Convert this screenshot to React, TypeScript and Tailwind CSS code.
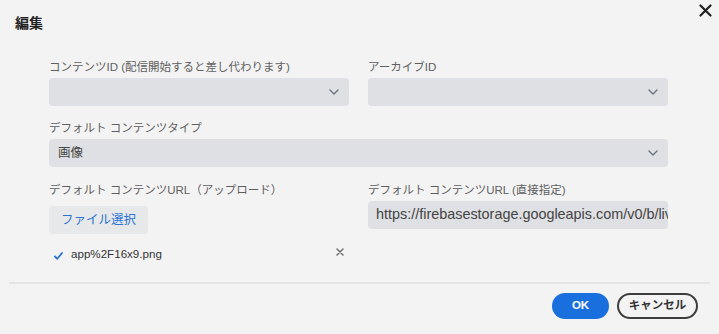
import React from "react";

const font = { fontFamily: '"Liberation Sans", "Noto Sans CJK JP", sans-serif' };

function Chevron() {
  return (
    <svg width="10" height="6" viewBox="0 0 10 6" className="shrink-0">
      <path d="M1 1l4 4 4-4" fill="none" stroke="#6b7280" strokeWidth="1.4" strokeLinecap="round" strokeLinejoin="round" />
    </svg>
  );
}

function Label({ children }: { children: React.ReactNode }) {
  return <div className="h-4 text-[11.5px] leading-4 text-[#5f5f5f] whitespace-nowrap">{children}</div>;
}

function Select({ value }: { value?: string }) {
  return (
    <div className="mt-[3px] flex h-7 items-center justify-between rounded-[4px] bg-[#dfe0e3] pl-[9px] pr-[10px]">
      <span className="text-[12.5px] text-[#444]">{value}</span>
      <Chevron />
    </div>
  );
}

export default function App() {
  return (
    <div className="relative h-[334px] w-[719px] overflow-hidden bg-[#f3f3f3]" style={font}>
      <button className="absolute right-[7px] top-[4px] text-[#222]">
        <svg width="13" height="13" viewBox="0 0 13 13">
          <path d="M1.5 1.5l10 10M11.5 1.5l-10 10" stroke="currentColor" strokeWidth="2.2" strokeLinecap="round" />
        </svg>
      </button>

      <div className="pl-[15px] pt-[13px] text-[14px] font-bold leading-5 text-[#222]">編集</div>

      <div className="ml-[49px] w-[619px]">
        <div className="mt-[26px] grid grid-cols-2 gap-x-[19px]">
          <div>
            <Label>コンテンツID (配信開始すると差し代わります)</Label>
            <Select />
          </div>
          <div>
            <Label>アーカイブID</Label>
            <Select />
          </div>
        </div>

        <div className="mt-[14px]">
          <Label>デフォルト コンテンツタイプ</Label>
          <Select value="画像" />
        </div>

        <div className="mt-[15px] grid grid-cols-2 gap-x-[19px]">
          <div>
            <Label>デフォルト コンテンツURL（アップロード）</Label>
            <button className="mt-2 flex h-7 w-[99px] items-center justify-center rounded-[4px] bg-[#e7e8ea] text-[12.5px] text-[#2a74d6]">
              ファイル選択
            </button>
            <div className="mt-[12px] flex h-4 items-center justify-between pl-[5px] pr-[5px]">
              <div className="flex items-center gap-[8px]">
                <svg width="9" height="8" viewBox="0 0 9 8" className="mt-[3px]">
                  <path d="M1 4.5l2.3 2.3L8 1" fill="none" stroke="#2a74d6" strokeWidth="1.8" strokeLinecap="round" strokeLinejoin="round" />
                </svg>
                <span className="text-[11.6px] text-[#333]">app%2F16x9.png</span>
              </div>
              <svg width="8" height="8" viewBox="0 0 8 8" className="-mt-[4px]">
                <path d="M1 1l6 6M7 1l-6 6" stroke="#666" strokeWidth="1.4" strokeLinecap="round" />
              </svg>
            </div>
          </div>
          <div>
            <Label>デフォルト コンテンツURL (直接指定)</Label>
            <div className="mt-[3px] flex h-7 items-center overflow-hidden rounded-[4px] bg-[#dfe0e3] pl-2 pr-2">
              <span className="whitespace-nowrap text-[14.4px] text-[#444]">
                https://firebasestorage.googleapis.com/v0/b/live-app.appspot.com/o/app%2F16x9.png
              </span>
            </div>
          </div>
        </div>
      </div>

      <div className="mx-[9px] mt-[20px] h-[2px] bg-[#e4e4e4]" />

      <div className="mt-[9px] flex justify-end gap-2 pr-[21px]">
        <button className="flex h-[26px] w-[57px] items-center justify-center rounded-full bg-[#1a6fdf] text-[11.5px] font-bold text-white">
          OK
        </button>
        <button className="flex h-[26px] w-[81px] items-center justify-center rounded-full border-2 border-[#3d3d3d] text-[11.5px] font-bold text-[#333]">
          キャンセル
        </button>
      </div>
    </div>
  );
}
